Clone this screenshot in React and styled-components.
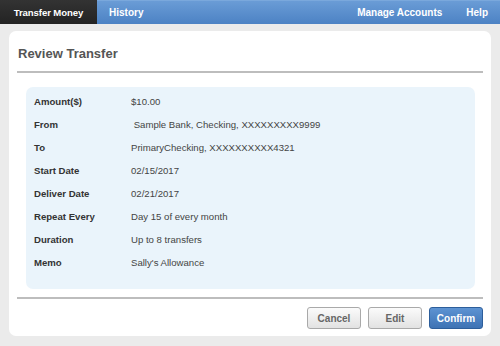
import React from "react";
import styled, { createGlobalStyle } from "styled-components";

const Global = createGlobalStyle`
  html, body { margin: 0; padding: 0; background: #ebebeb; }
  body { font-family: "Liberation Sans", Arial, sans-serif; }
  #root { min-height: 346px; }
`;

const Nav = styled.nav`
  display: flex;
  height: 24px;
  background: linear-gradient(#6a9cd6, #4c82c4);
  border-top: 1px solid #7aa8dc;
  box-sizing: border-box;
`;

const NavItem = styled.a`
  display: flex;
  align-items: center;
  justify-content: center;
  padding: 0 12px;
  font-size: 10px;
  font-weight: bold;
  color: #fff;
  white-space: nowrap;
  text-decoration: none;
  background: ${(p) => (p.$active ? "linear-gradient(#333, #232323)" : "transparent")};
  ${(p) => (p.$active ? "margin-top: -1px; width: 97px; padding: 0; font-size: 9.6px; letter-spacing: -0.1px;" : "")}
`;

const Spacer = styled.div`
  flex: 1;
`;

const Card = styled.section`
  margin: 7px 9px 0;
  background: #fff;
  border-radius: 7px;
  padding: 0 8px 7px;
`;

const Title = styled.h2`
  margin: 0;
  padding: 15px 0 0 1px;
  font-size: 13px;
  line-height: 16px;
  font-weight: bold;
  color: #555;
`;

const Divider = styled.hr`
  margin: ${(p) => p.$m};
  border: 0;
  height: 2px;
  background: #bdbdbd;
`;

const Panel = styled.div`
  margin: 14px 8px 0 9px;
  background: #eaf4fb;
  border-radius: 7px;
  padding: 3px 8px 15px;
`;

const Row = styled.div`
  display: grid;
  grid-template-columns: 97px 1fr;
  height: 23px;
  align-items: center;
  font-size: 9.6px;
`;

const Label = styled.span`
  font-weight: bold;
  color: #333;
`;

const Value = styled.span`
  color: #444;
  white-space: pre;
`;

const Actions = styled.div`
  display: flex;
  justify-content: flex-end;
  gap: 7px;
`;

const Button = styled.button`
  width: 54px;
  height: 22px;
  padding: 0;
  border-radius: 3px;
  font-family: "Liberation Sans", Arial, sans-serif;
  font-size: 10px;
  font-weight: bold;
  cursor: pointer;
  border: 1px solid ${(p) => (p.$primary ? "#2d5e9b" : "#a9a9a9")};
  color: ${(p) => (p.$primary ? "#fff" : "#666")};
  background: ${(p) =>
    p.$primary
      ? "linear-gradient(#5d93d2, #3e73b4)"
      : "linear-gradient(#fbfbfb, #e2e2e2)"};
`;

const rows = [
  ["Amount($)", "$10.00"],
  ["From", " Sample Bank, Checking, XXXXXXXXX9999"],
  ["To", "PrimaryChecking, XXXXXXXXXX4321"],
  ["Start Date", "02/15/2017"],
  ["Deliver Date", "02/21/2017"],
  ["Repeat Every", "Day 15 of every month"],
  ["Duration", "Up to 8 transfers"],
  ["Memo", "Sally's Allowance"],
];

export default function App() {
  return (
    <>
      <Global />
      <Nav>
        <NavItem $active>Transfer Money</NavItem>
        <NavItem>History</NavItem>
        <Spacer />
        <NavItem>Manage Accounts</NavItem>
        <NavItem>Help</NavItem>
      </Nav>
      <Card>
        <Title>Review Transfer</Title>
        <Divider $m="9px 0 0" />
        <Panel>
          {rows.map(([l, v]) => (
            <Row key={l}>
              <Label>{l}</Label>
              <Value>{v}</Value>
            </Row>
          ))}
        </Panel>
        <Divider $m="8px 0 8px" />
        <Actions>
          <Button>Cancel</Button>
          <Button>Edit</Button>
          <Button $primary>Confirm</Button>
        </Actions>
      </Card>
    </>
  );
}
